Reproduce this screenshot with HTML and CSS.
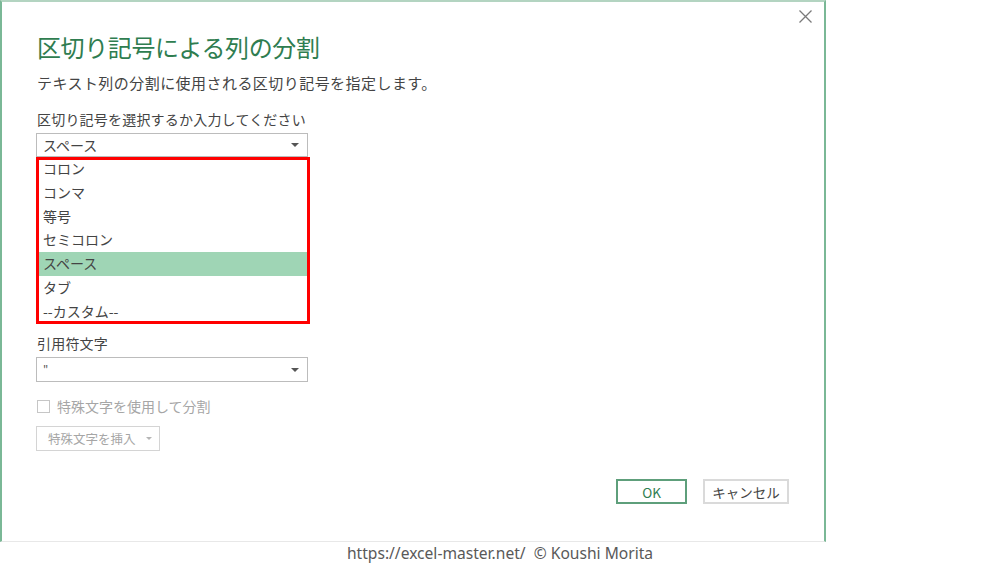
FILE: index.html
```html
<!DOCTYPE html>
<html lang="ja">
<head>
    <meta charset="UTF-8">
    <title>区切り記号による列の分割</title>
    <link rel="stylesheet" href="styles.css">
</head>
<body>

<div class="dialogo">
    <button class="cerrar" aria-label="閉じる">
        <svg width="13" height="13" viewBox="0 0 13 13"><path d="M0.5 0.5 L12.5 12.5 M12.5 0.5 L0.5 12.5" stroke="#7a7a7a" stroke-width="1.3" fill="none"/></svg>
    </button>

    <h1 class="titulo">区切り記号による列の分割</h1>
    <p class="subtitulo">テキスト列の分割に使用される区切り記号を指定します。</p>

    <label class="etiqueta">区切り記号を選択するか入力してください</label>
    <div class="selector">
        <span>スペース</span>
        <span class="flecha"></span>
    </div>
    <ul class="lista">
        <li>コロン</li>
        <li>コンマ</li>
        <li>等号</li>
        <li>セミコロン</li>
        <li class="activo">スペース</li>
        <li>タブ</li>
        <li>--カスタム--</li>
    </ul>

    <label class="etiqueta etiqueta-comillas">引用符文字</label>
    <div class="selector selector-comillas">
        <span class="comilla">"</span>
        <span class="flecha"></span>
    </div>

    <div class="casilla">
        <span class="caja"></span>
        <span>特殊文字を使用して分割</span>
    </div>

    <div class="insertar">
        <span>特殊文字を挿入</span>
        <span class="flecha flecha-clara"></span>
    </div>

    <div class="botones">
        <button class="boton boton-ok">OK</button>
        <button class="boton">キャンセル</button>
    </div>
</div>

<div class="pie">https://excel-master.net/&nbsp; © Koushi Morita</div>

</body>
</html>
```

FILE: styles.css
```css
body {
    margin: 0;
    padding: 0;
    background-color: #ffffff;
    color: #444444;
    font-family: "Noto Sans CJK JP", "Noto Sans", sans-serif;
    width: 1000px;
    height: 563px;
    overflow: hidden;
}

.dialogo {
    position: relative;
    height: 539px;
    border-left: 2px solid #7ab896;
    border-right: 2px solid #7ab896;
    border-top: 2px solid #b3d4c1;
    border-bottom: 1px solid #e8e8e8;
    padding: 0 0 0 34px;
    box-sizing: content-box;
    width: 788px;
    display: flex;
    flex-direction: column;
    align-items: flex-start;
}

.cerrar {
    position: absolute;
    top: 8px;
    right: 12px;
    background: none;
    border: none;
    padding: 0;
    width: 13px;
    height: 13px;
    cursor: pointer;
}

.titulo {
    margin: 29px 0 0 1px;
    font-size: 24px;
    line-height: 32px;
    font-weight: normal;
    color: #2f7d50;
    letter-spacing: -0.4px;
}

.subtitulo {
    margin: 9px 0 0 1px;
    font-size: 15px;
    line-height: 22px;
    color: #444444;
    letter-spacing: 0.45px;
}

.etiqueta {
    margin: 15px 0 0 1px;
    font-size: 14px;
    line-height: 20px;
    color: #444444;
    letter-spacing: 0.2px;
}

.selector {
    margin-top: 4px;
    width: 272px;
    height: 24px;
    border: 1px solid #bcbcbc;
    box-sizing: border-box;
    display: flex;
    align-items: center;
    justify-content: space-between;
    padding: 0 8px 0 6px;
    font-size: 14px;
    color: #444444;
}

.flecha {
    width: 0;
    height: 0;
    border-left: 4px solid transparent;
    border-right: 4px solid transparent;
    border-top: 4px solid #555555;
}

.flecha-clara {
    border-top-color: #b5b5b5;
    border-left-width: 3px;
    border-right-width: 3px;
    border-top-width: 3px;
}

.lista {
    position: relative;
    list-style: none;
    margin: 0;
    padding: 0;
    width: 274px;
    font-size: 14px;
    color: #444444;
}

.lista::after {
    content: "";
    position: absolute;
    top: 0;
    left: 0;
    right: 0;
    bottom: -1px;
    border: 3px solid #ff0000;
}

.lista li {
    height: 23.75px;
    line-height: 23.75px;
    padding-left: 7px;
}

.lista li.activo {
    background-color: #9fd5b5;
}

.etiqueta-comillas {
    margin-top: 10px;
}

.selector-comillas {
    height: 25px;
}

.comilla {
    font-size: 11px;
    color: #555555;
}

.casilla {
    margin: 14px 0 0 1px;
    display: flex;
    align-items: center;
    gap: 7px;
    font-size: 14px;
    line-height: 20px;
    color: #a6a6a6;
}

.caja {
    width: 11px;
    height: 11px;
    border: 1px solid #c6c6c6;
}

.insertar {
    margin-top: 10px;
    width: 124px;
    height: 25px;
    border: 1px solid #d4d4d4;
    box-sizing: border-box;
    display: flex;
    align-items: center;
    gap: 10px;
    padding-left: 11px;
    font-size: 12.5px;
    color: #a6a6a6;
}

.botones {
    margin-top: auto;
    margin-bottom: 37px;
    align-self: flex-end;
    margin-right: 35px;
    display: flex;
    gap: 16px;
}

.boton {
    height: 25px;
    padding: 0;
    width: 86px;
    background-color: #ffffff;
    border: 2px solid #dadada;
    font-family: "Noto Sans CJK JP", "Noto Sans", sans-serif;
    font-size: 13.5px;
    color: #444444;
}

.boton-ok {
    width: 71px;
    border-color: #5e9f7b;
    color: #2f7d50;
}

.pie {
    text-align: center;
    font-family: "Noto Sans", "Noto Sans CJK JP", sans-serif;
    font-size: 15.6px;
    line-height: 22px;
    color: #595959;
}
```
